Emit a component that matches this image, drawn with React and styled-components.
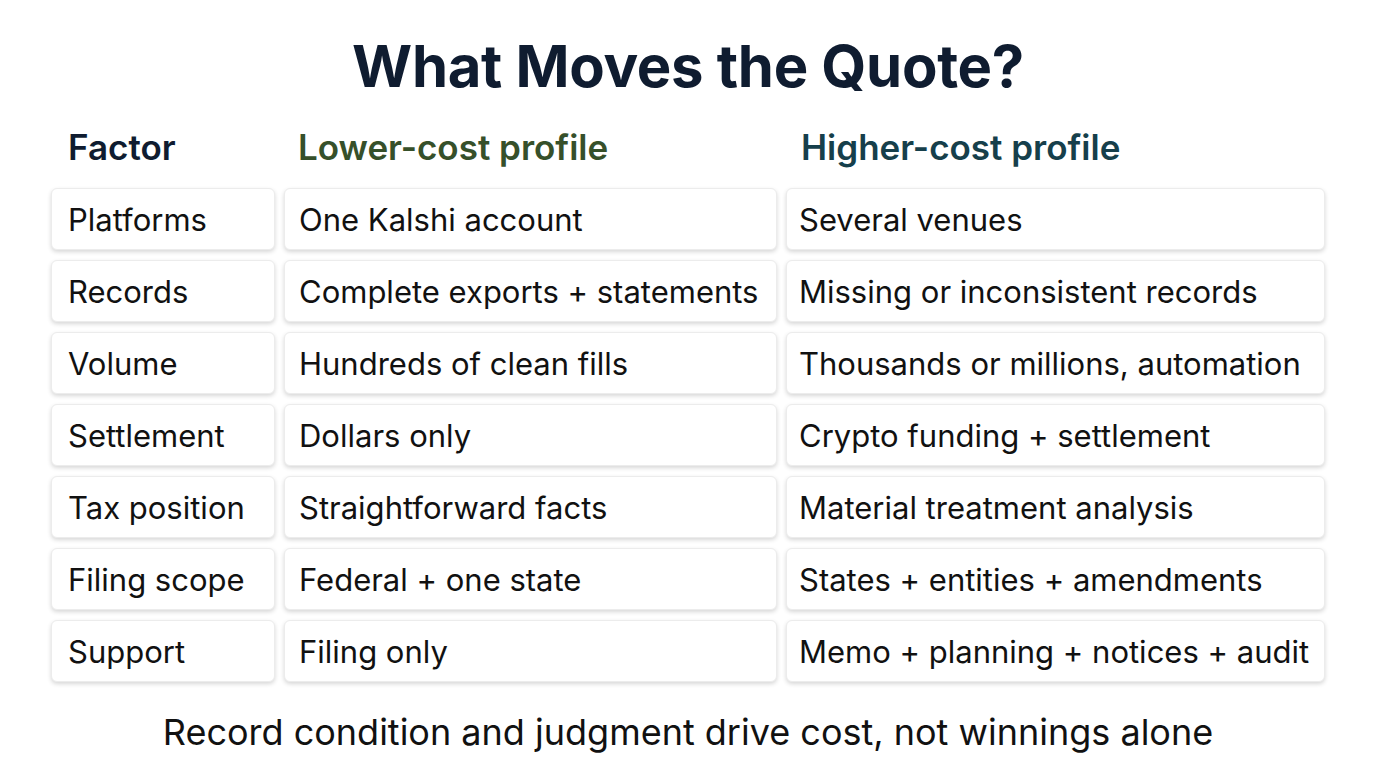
import React from 'react'
import styled, { createGlobalStyle } from 'styled-components'

// Page base
const GlobalStyle = createGlobalStyle`
  body {
    margin: 0;
    background: #ffffff;
    font-family: Inter, "Noto Sans", "Liberation Sans", sans-serif;
  }
`

const Page = styled.div`
  width: 1376px;
  height: 768px;
  display: flex;
  flex-direction: column;
  align-items: center;
  box-sizing: border-box;
  padding-top: 30px;
`

const Title = styled.h1`
  margin: 0;
  font-size: 58px;
  line-height: 72px;
  font-weight: 700;
  color: #0f1c30;
  letter-spacing: -0.3px;
`

const Table = styled.div`
  display: grid;
  grid-template-columns: 224px 493px 539px;
  column-gap: 9px;
  row-gap: 10px;
  margin-top: 20px;
`

const Head = styled.div`
  height: 50px;
  display: flex;
  align-items: center;
  padding-left: ${(p) => p.$pad || 17}px;
  font-size: 35px;
  font-weight: 600;
  color: ${(p) => p.$color};
  margin-bottom: 6px;
`

const Cell = styled.div`
  height: 62px;
  box-sizing: border-box;
  display: flex;
  align-items: center;
  padding-left: ${(p) => p.$pad || 16}px;
  background: #ffffff;
  border: 1px solid #ececec;
  border-radius: 6px;
  box-shadow: 0 2px 4px rgba(0, 0, 0, 0.16);
  font-size: 31px;
  color: #111111;
  white-space: nowrap;
`

const Footer = styled.p`
  margin: 28px 0 0;
  font-size: 36px;
  color: #111111;
`

const rows = [
  ['Platforms', 'One Kalshi account', 'Several venues'],
  ['Records', 'Complete exports + statements', 'Missing or inconsistent records'],
  ['Volume', 'Hundreds of clean fills', 'Thousands or millions, automation'],
  ['Settlement', 'Dollars only', 'Crypto funding + settlement'],
  ['Tax position', 'Straightforward facts', 'Material treatment analysis'],
  ['Filing scope', 'Federal + one state', 'States + entities + amendments'],
  ['Support', 'Filing only', 'Memo + planning + notices + audit'],
]

export default function App() {
  return (
    <Page>
      <GlobalStyle />
      <Title>What Moves the Quote?</Title>
      <Table>
        <Head $color="#0f1c30">Factor</Head>
        <Head $color="#36502a" $pad={14}>Lower-cost profile</Head>
        <Head $color="#163f4b" $pad={15}>Higher-cost profile</Head>
        {rows.map((r) => (
          <React.Fragment key={r[0]}>
            <Cell>{r[0]}</Cell>
            <Cell $pad={14}>{r[1]}</Cell>
            <Cell $pad={12}>{r[2]}</Cell>
          </React.Fragment>
        ))}
      </Table>
      <Footer>Record condition and judgment drive cost, not winnings alone</Footer>
    </Page>
  )
}
